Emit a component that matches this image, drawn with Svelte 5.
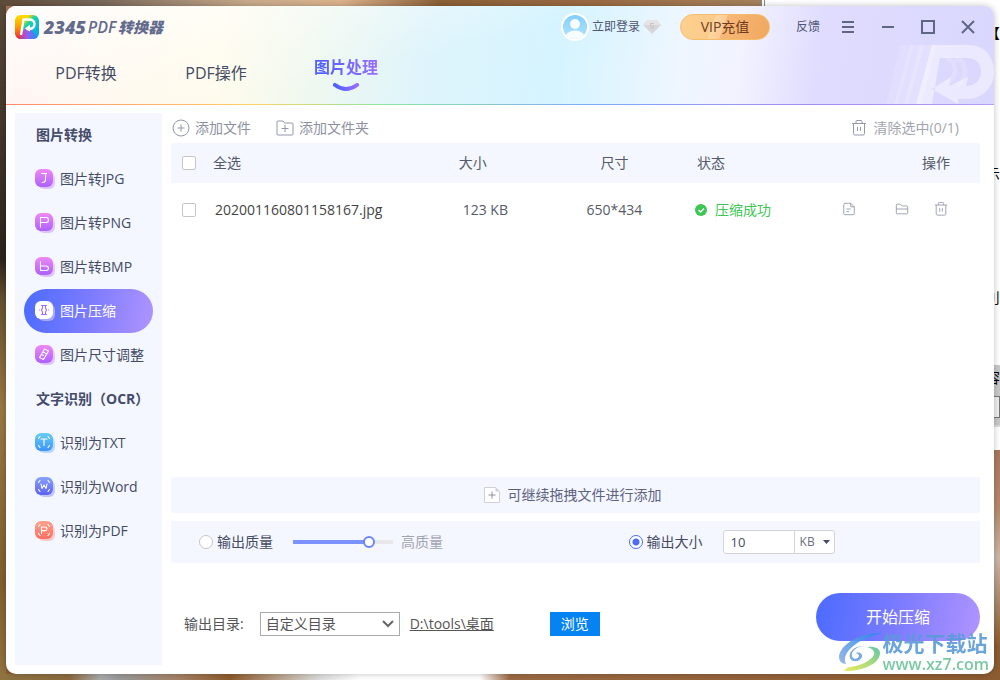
<script lang="ts">
  let tab = $state('图片处理');
  let current = $state('图片压缩');
  let mode = $state('size');
  let quality = $state(80);
  let size = $state('10');
  let unit = $state('KB');
  let directory = $state('自定义目录');
  let files = $state([
    { name: '202001160801158167.jpg', size: '123 KB', dimensions: '650*434', status: '压缩成功', selected: false },
  ]);

  const tabs = ['PDF转换', 'PDF操作', '图片处理'];

  const groups = [
    {
      title: '图片转换',
      items: [
        { name: '图片转JPG', icon: 'jpg', color: 'pink' },
        { name: '图片转PNG', icon: 'png', color: 'pink' },
        { name: '图片转BMP', icon: 'bmp', color: 'pink' },
        { name: '图片压缩', icon: 'compress', color: 'pink' },
        { name: '图片尺寸调整', icon: 'resize', color: 'pink' },
      ],
    },
    {
      title: '文字识别（OCR）',
      items: [
        { name: '识别为TXT', icon: 'txt', color: 'blue' },
        { name: '识别为Word', icon: 'word', color: 'indigo' },
        { name: '识别为PDF', icon: 'pdf', color: 'coral' },
      ],
    },
  ];

  let selectedCount = $derived(files.filter((f) => f.selected).length);
  let allSelected = $derived(files.length > 0 && selectedCount === files.length);

  function toggleAll() {
    const next = !allSelected;
    files.forEach((f) => (f.selected = next));
  }

  function clearSelected() {
    files = files.filter((f) => !f.selected);
  }

  function remove(name: string) {
    files = files.filter((f) => f.name !== name);
  }
</script>

{#snippet trash()}
  <svg class="line-icon" viewBox="0 0 16 16" aria-hidden="true">
    <path d="M1 3.500h14M5 3.500v-2q0-1 1-1h4q1 0 1 1v2M2.500 3.500v10q0 1.500 1.500 1.500h8q1.500 0 1.500-1.500v-10M6.500 7v4M9.500 7v4" />
  </svg>
{/snippet}

{#snippet itemIcon(icon, color, active)}
  <svg class="item-icon" viewBox="0 0 20 20" aria-hidden="true">
    <rect x="3" y="3" width="17" height="17" rx="6" fill={active ? '#b9b5ff' : `url(#${color})`} opacity={active ? 0.8 : 0.35} />
    <rect width="18" height="18" rx="6" fill={active ? '#fff' : `url(#${color})`} />
    <g fill="none" stroke={active ? '#a06bff' : '#fff'} stroke-width="1.1" stroke-linecap="round" stroke-linejoin="round">
      {#if icon === 'jpg'}
        <path d="M6.500 4.500h5M10.500 4.500v6q0 3-3.500 3" />
      {:else if icon === 'png'}
        <path d="M5.500 14V4.500h5.500q2.500 0 2.500 2.500t-2.500 2.500H5.500" />
      {:else if icon === 'bmp'}
        <path d="M5.500 4.500V13.500h5.500q2.500 0 2.500-2.200t-2.500-2.300H5.500" />
      {:else if icon === 'compress'}
        <path d="M6.500 4.500h5M6.500 13.500h5M7.500 4.500v2.500l-1 2 1 2v2.500M10.500 4.500v2.500l1 2-1 2v2.500M4.500 9h.1M13.500 9h.1" />
      {:else if icon === 'resize'}
        <path d="M9.500 4l4 2-5 8.500-4-2zM8 7l2 1M6.500 9.500l2 1M10.500 8.500l1 .5" />
      {:else}
        <path d="M3.500 5.500l1.500-2M14.500 5.500l-1.500-2M3.500 12.500l1.500 2M14.500 12.500l-1.500 2" />
        {#if icon === 'txt'}
          <path d="M6 6h6M9 6v6.500" />
        {:else if icon === 'word'}
          <path d="M6 7l1 4.500 2-3.500 2 3.500 1-4.500" />
        {:else}
          <path d="M6.500 12.500V6h3.500q2 0 2 1.800t-2 1.800H6.500" />
        {/if}
      {/if}
    </g>
  </svg>
{/snippet}

<svg class="defs" width="0" height="0" aria-hidden="true">
  <defs>
    <linearGradient id="pink" x1="0" y1="0" x2="0" y2="1">
      <stop offset="0" stop-color="#f089f6" /><stop offset="1" stop-color="#ac60fb" />
    </linearGradient>
    <linearGradient id="blue" x1="0" y1="0" x2="0" y2="1">
      <stop offset="0" stop-color="#66cdf5" /><stop offset="1" stop-color="#3c94fa" />
    </linearGradient>
    <linearGradient id="indigo" x1="0" y1="0" x2="0" y2="1">
      <stop offset="0" stop-color="#88a2fb" /><stop offset="1" stop-color="#5b62f5" />
    </linearGradient>
    <linearGradient id="coral" x1="0" y1="0" x2="0" y2="1">
      <stop offset="0" stop-color="#ffa28e" /><stop offset="1" stop-color="#fb6f61" />
    </linearGradient>
    <linearGradient id="smile">
      <stop offset="0" stop-color="#4a62ff" /><stop offset="1" stop-color="#9a6cff" />
    </linearGradient>
  </defs>
</svg>

<div class="desktop">
  <div class="back-window" aria-hidden="true">
    <span>【</span>
    <span>示</span>
    <span>刂</span>
    <div class="back-strip"><span>容</span><i></i></div>
  </div>

  <div class="window">
    <header>
      <svg class="header-art" viewBox="0 0 108 59" aria-hidden="true">
        <path d="M14 0h14L12 59H0z" fill="#fff" opacity=".12" />
        <path d="M24 0h14L22 59H8z" fill="#fff" opacity=".15" />
        <path d="M34 0h16L36 59H18z" fill="#fff" opacity=".2" />
        <path fill="#fff" opacity=".45" fill-rule="evenodd" d="M46 0h36c16 0 26 11 26 27S96 54 80 54H72v5L46 44l19-12-2 9 19-9-2 9c8 0 15-5 15-14s-5-14-14-14H54L46 59H30z" />
        <path d="M60 13c12 4 12 19 0 26M69 13c14 4 12 22 2 27" fill="none" stroke="#fff" stroke-width="5" opacity=".15" />
      </svg>

      <div class="titlebar">
        <svg class="logo" viewBox="0 0 24 24" aria-hidden="true">
          <defs>
            <linearGradient id="logo-a" x1="0" y1="0" x2="1" y2="1">
              <stop offset="0" stop-color="#ffd500" /><stop offset=".3" stop-color="#ffd500" />
              <stop offset=".45" stop-color="#17d3a5" /><stop offset="1" stop-color="#079bff" />
            </linearGradient>
            <linearGradient id="logo-b" x1="0" y1="0" x2="0" y2="1">
              <stop offset="0" stop-color="#ffe100" /><stop offset=".5" stop-color="#ff9a00" /><stop offset="1" stop-color="#f5203c" />
            </linearGradient>
            <linearGradient id="logo-c">
              <stop offset="0" stop-color="#f5203c" /><stop offset=".5" stop-color="#9b5bea" /><stop offset="1" stop-color="#079bff" />
            </linearGradient>
            <clipPath id="logo-clip"><rect width="24" height="24" rx="6" /></clipPath>
          </defs>
          <g clip-path="url(#logo-clip)">
            <rect width="24" height="24" fill="url(#logo-a)" />
            <path d="M0 24L13 11l11 13z" fill="url(#logo-c)" />
            <path d="M0 0h9L5 24H0z" fill="url(#logo-b)" />
          </g>
          <path d="M6 20L8.500 4.500h5c4 0 6 2 6 4.600 0 3-2.300 5-6 5h-2" fill="none" stroke="#fff" stroke-width="2.400" />
          <path d="M10 13.500l5-4v7z" fill="#fff" />
        </svg>
        <h1><b>2345</b><em>PDF</em><small>转换器</small></h1>

        <button class="login">
          <svg class="avatar" viewBox="0 0 28 28" aria-hidden="true">
            <defs>
              <linearGradient id="sky" x1="0" y1="0" x2="0" y2="1">
                <stop offset="0" stop-color="#80cdfd" /><stop offset="1" stop-color="#b5e6ff" />
              </linearGradient>
              <clipPath id="face"><circle cx="14" cy="14" r="12" /></clipPath>
            </defs>
            <circle cx="14" cy="14" r="13" fill="url(#sky)" stroke="#fff" stroke-width="2" />
            <g clip-path="url(#face)" fill="#f7fcff">
              <circle cx="14" cy="11" r="5" />
              <ellipse cx="14" cy="25" rx="10" ry="7.500" />
            </g>
          </svg>
          立即登录
          <svg class="gem" viewBox="0 0 18 14" aria-hidden="true">
            <path d="M4 0h10l4 5-9 9-9-9z" fill="#d8d6d8" />
            <path d="M4 0h10l4 5H0z" fill="#e5e3e4" />
            <path d="M11 3.500H7.500v2.200h3.200v2.300H7" fill="none" stroke="#c8c5c8" />
          </svg>
        </button>
        <button class="vip">VIP充值</button>
        <button class="feedback">反馈</button>
        <button class="win-button" aria-label="菜单">
          <svg viewBox="0 0 14 14"><path d="M1 2h12M1 7h12M1 12h12" /></svg>
        </button>
        <button class="win-button" aria-label="最小化">
          <svg viewBox="0 0 14 14"><path d="M1 7h12" /></svg>
        </button>
        <button class="win-button" aria-label="最大化">
          <svg viewBox="0 0 14 14"><path d="M1 1h12v12H1z" /></svg>
        </button>
        <button class="win-button" aria-label="关闭">
          <svg viewBox="0 0 14 14"><path d="M1 1l12 12M13 1L1 13" /></svg>
        </button>
      </div>

      <nav>
        {#each tabs as name}
          <button class="tab" class:active={tab === name} onclick={() => (tab = name)}>
            <span>{name}</span>
            {#if tab === name}
              <svg viewBox="0 0 26 9" aria-hidden="true">
                <path d="M2 2q11 8 22 0" fill="none" stroke="url(#smile)" stroke-width="4" stroke-linecap="round" />
              </svg>
            {/if}
          </button>
        {/each}
      </nav>
    </header>

    <div class="content">
      <aside>
        {#each groups as group}
          <h2>{group.title}</h2>
          {#each group.items as item}
            <button class="side-item" class:active={current === item.name} onclick={() => (current = item.name)}>
              {@render itemIcon(item.icon, item.color, current === item.name)}
              {item.name}
            </button>
          {/each}
        {/each}
      </aside>

      <main>
        <div class="toolbar">
          <button>
            <svg class="line-icon large" viewBox="0 0 18 18" aria-hidden="true">
              <circle cx="9" cy="9" r="8" /><path d="M5.500 9h7M9 5.500v7" />
            </svg>
            添加文件
          </button>
          <button>
            <svg class="line-icon large" viewBox="0 0 18 18" aria-hidden="true">
              <path d="M1 15V3q0-1 1-1h5l1.500 2H16q1 0 1 1v10q0 1-1 1H2q-1 0-1-1zM5.500 9.500h7M9 6v7" />
            </svg>
            添加文件夹
          </button>
          <button class="clear" onclick={clearSelected}>
            {@render trash()}
            清除选中({selectedCount}/{files.length})
          </button>
        </div>

        <table>
          <thead>
            <tr>
              <th class="check"><input type="checkbox" id="all" checked={allSelected} onchange={toggleAll} /></th>
              <th class="name"><label for="all">全选</label></th>
              <th class="size">大小</th>
              <th class="dimensions">尺寸</th>
              <th class="status">状态</th>
              <th class="actions">操作</th>
            </tr>
          </thead>
          <tbody>
            {#each files as file}
              <tr>
                <td class="check"><input type="checkbox" aria-label={file.name} bind:checked={file.selected} /></td>
                <td class="name">{file.name}</td>
                <td class="size">{file.size}</td>
                <td class="dimensions">{file.dimensions}</td>
                <td class="status">
                  <div class="done">
                    <svg viewBox="0 0 12 12" aria-hidden="true">
                      <circle cx="6" cy="6" r="6" fill="#3cc653" />
                      <path d="M3.500 6l2 2 3.500-3.500" fill="none" stroke="#fff" stroke-width="1.300" />
                    </svg>
                    {file.status}
                  </div>
                </td>
                <td class="actions">
                  <div class="row-actions">
                    <button class="open" aria-label="打开文件">
                      <svg class="line-icon" viewBox="0 0 16 16">
                        <path d="M10 1.500H3.500q-1.500 0-1.500 1.500v10q0 1.500 1.500 1.500h9q1.500 0 1.500-1.500V5.500zM10 1.500v4h4M5 8h5M5 11h3" />
                      </svg>
                    </button>
                    <button aria-label="打开文件夹">
                      <svg class="line-icon" viewBox="0 0 16 16">
                        <path d="M1.500 12.500v-9q0-1 1-1h3.500l2 2h5.500q1 0 1 1v7q0 1-1 1h-11q-1 0-1-1zM1.500 8h13" />
                      </svg>
                    </button>
                    <button aria-label="删除" onclick={() => remove(file.name)}>{@render trash()}</button>
                  </div>
                </td>
              </tr>
            {/each}
          </tbody>
        </table>

        <button class="drop">
          <svg viewBox="0 0 16 16" aria-hidden="true">
            <path d="M.5.5h11l4 4v11H.5z" fill="#fff" stroke="#d0d0d4" />
            <path d="M11.500.5v4h4z" fill="#d0d0d4" />
            <path d="M4.500 8h7M8 4.500v7" stroke="#8d8f99" />
          </svg>
          可继续拖拽文件进行添加
        </button>

        <div class="options">
          <div class="option">
            <label class="radio"><input type="radio" name="mode" value="quality" bind:group={mode} />输出质量</label>
            <input
              class="slider"
              type="range"
              min="0"
              max="100"
              aria-label="输出质量"
              style="--value: {quality}%"
              bind:value={quality}
            />
            <span class="hint">高质量</span>
          </div>
          <div class="option">
            <label class="radio"><input type="radio" name="mode" value="size" bind:group={mode} />输出大小</label>
            <div class="size-field">
              <input type="text" aria-label="输出大小" bind:value={size} />
              <div class="unit">
                <select aria-label="单位" bind:value={unit}>
                  <option>KB</option>
                  <option>MB</option>
                </select>
                <svg viewBox="0 0 7 4" aria-hidden="true"><path d="M0 0h7L3.500 4z" fill="#444b63" /></svg>
              </div>
            </div>
          </div>
        </div>

        <footer>
          <div class="output">
            <label for="directory">输出目录:</label>
            <div class="directory">
              <select id="directory" bind:value={directory}>
                <option>自定义目录</option>
                <option>原文件目录</option>
              </select>
              <svg viewBox="0 0 12 8" aria-hidden="true"><path d="M1 1l5 5 5-5" fill="none" stroke="#666" stroke-width="2" /></svg>
            </div>
            <a href="#output">D:\tools\桌面</a>
            <button class="browse">浏览</button>
          </div>
          <button class="start">开始压缩</button>
        </footer>
      </main>
    </div>
  </div>

  <div class="site-mark">
    <svg viewBox="0 0 44 40" aria-hidden="true">
      <defs>
        <linearGradient id="mark-blue" x1="0" y1="1" x2="1" y2="0">
          <stop offset="0" stop-color="#8fb0e6" /><stop offset="1" stop-color="#2389e6" />
        </linearGradient>
        <linearGradient id="mark-green" x1="0" y1="1" x2="1" y2="0">
          <stop offset="0" stop-color="#efe94e" /><stop offset=".5" stop-color="#a5d96a" /><stop offset="1" stop-color="#4fc0a0" />
        </linearGradient>
      </defs>
      <path d="M44 1C22 1 2 12 1 25c0 4 3 7 7 7-5-10 8-24 36-31z" fill="url(#mark-blue)" />
      <path d="M27 14c-10-1-17 6-15 12 2 5 10 4 12-1 1-4-4-6-7-3 2-1 4 0 4 2-1 3-6 4-7 0-1-5 5-10 13-10z" fill="#6fa3dc" />
      <path d="M29 15c7-1 13 1 13 6 0 10-16 19-38 18 5 0 3-4 8-4 12-1 26-9 24-15-1-3-4-4-7-5z" fill="url(#mark-green)" />
    </svg>
    <div>
      <strong>极光下载站</strong>
      <span>www.xz7.com</span>
    </div>
  </div>
</div>

<style>
  :global(body) {
    margin: 0;
    background: #8a6138;
  }

  .defs {
    position: absolute;
  }

  .desktop {
    box-sizing: border-box;
    display: flex;
    position: relative;
    min-height: 100vh;
    padding: 6px;
    overflow: hidden;
    font-family: 'Open Sans', 'Noto Sans CJK SC', sans-serif;
    font-size: 14px;
    line-height: 20px;
    color: #444b63;
    background:
      linear-gradient(90deg, #8e7340 0, #8b6b40 7%, #aaa 10%, #999 12%, #a58063 18%, #8d5b2c 23%, #ddd 32%, #fff 36%, #fff 48%, #9c6a43 51%, #8b5c31 100%) bottom / 100% 6px no-repeat,
      linear-gradient(90deg, #5e4a38, #79685a 10%, #c9ab8c 25%, #dcb48d 34%, #8b6038 44%, #9b6b45 60%, #a5825c 76%) top / 100% 6px no-repeat,
      linear-gradient(180deg, #594a38 0, #2c241c 38%, #66502f 44%, #9a7844 60%, #806030 85%, #91733f 100%) left / 6px 100% no-repeat,
      linear-gradient(180deg, #a8785a 66%, #b58b6e 75%, #c9b8a8 82%, #8b5c31 95%);
  }

  button,
  input,
  select {
    font: inherit;
    color: inherit;
  }

  button {
    padding: 0;
    border: none;
    background: none;
    cursor: pointer;
  }

  /* another window, partly hidden behind this one */
  .back-window {
    box-sizing: border-box;
    position: absolute;
    top: 0;
    right: 0;
    width: 239px;
    height: 450px;
    border-left: 4px double #888;
    background: #fff;
    color: #000;
  }

  .back-window span {
    position: absolute;
    right: 0;
    top: 164px;
  }

  .back-window span:first-child {
    top: 23px;
  }

  .back-window span:nth-child(3) {
    top: 288px;
  }

  .back-strip {
    position: absolute;
    top: 365px;
    right: 0;
    width: 20px;
    height: 60px;
    border-bottom: 2px solid #ddd;
    background: #c8c8c8;
  }

  .back-window .back-strip span {
    top: 3px;
  }

  .back-strip i {
    position: absolute;
    right: 0;
    top: 31px;
    width: 12px;
    height: 20px;
    border: 1px solid #777;
    background: #eee;
  }

  .window {
    display: flex;
    flex-direction: column;
    flex: 1;
    position: relative;
    overflow: hidden;
    border-radius: 10px;
    background: #fff;
    box-shadow: 0 0 6px rgba(0, 0, 0, 0.25);
  }

  header {
    position: relative;
    height: 99px;
    background:
      linear-gradient(90deg, #ff8a70, #ffd166 25%, #8fe6a0 38%, #7fa8ff 60%, #a78bf5 82%, #b79bf5) bottom / 100% 1px no-repeat,
      linear-gradient(165deg, rgba(255, 255, 255, 0.8), rgba(255, 255, 255, 0) 45%),
      linear-gradient(97deg, #fff1ef 0, #fff8ec 12%, #fffbeb 22%, #eef8f0 32%, #dff4fb 42%, #d5f4ff 56%, #eef6ff 68%, #f2f3ff 74%, #dfdcff 82%, #dad7fe 100%);
  }

  .header-art {
    position: absolute;
    right: 0;
    bottom: 1px;
    width: 108px;
    height: 59px;
  }

  .titlebar {
    display: flex;
    position: relative;
    align-items: center;
    height: 42px;
    padding: 0 19px 0 9px;
    color: #4f5674;
    font-size: 12px;
  }

  .logo {
    width: 24px;
    height: 24px;
  }

  h1 {
    display: flex;
    align-items: center;
    gap: 2px;
    margin: 0 auto 0 5px;
    color: #626b8d;
    font-size: 18px;
    font-style: italic;
  }

  h1 b {
    font-weight: 800;
  }

  h1 em {
    font-weight: 600;
    font-size: 16px;
  }

  h1 small {
    font-size: 15px;
    font-weight: 900;
  }

  .login {
    display: flex;
    align-items: center;
    gap: 3px;
    margin-right: 19px;
  }

  .avatar {
    width: 28px;
    height: 28px;
  }

  .gem {
    width: 18px;
    height: 14px;
  }

  .vip {
    width: 90px;
    height: 26px;
    margin-right: 26px;
    border: 1px solid #f5bd6a;
    border-radius: 13px;
    background: linear-gradient(110deg, #fdd191 0, #fbcb8a 36%, #fdd6a2 37%, #fbcb95 48%, #f6b877 49%, #f1a75e 100%);
    color: #713b22;
    font-size: 14px;
    line-height: 20px;
  }

  .feedback {
    margin-right: 8px;
  }

  .win-button {
    display: grid;
    place-items: center;
    width: 40px;
    height: 30px;
  }

  .win-button:last-child {
    margin-right: -13px;
  }

  .win-button svg {
    width: 14px;
    height: 14px;
    fill: none;
    stroke: #606786;
    stroke-width: 2;
  }

  nav {
    display: flex;
    position: relative;
    gap: 64px;
    padding: 0 47px;
  }

  .tab {
    display: flex;
    flex-direction: column;
    align-items: center;
    min-width: 66px;
    padding-top: 13px;
    font-size: 16px;
    line-height: 24px;
  }

  .tab.active {
    padding-top: 7px;
    font-weight: 700;
  }

  .tab.active span {
    background: linear-gradient(90deg, #4a5fff, #9a6cff);
    background-clip: text;
    color: transparent;
  }

  .tab svg {
    width: 26px;
    height: 9px;
    margin-top: 4px;
  }

  .content {
    display: flex;
    flex: 1;
    gap: 9px;
    padding: 8px 14px 9px 9px;
  }

  aside {
    display: flex;
    flex-direction: column;
    flex: 0 0 147px;
    min-width: 0;
    background: #f4f7ff;
  }

  h2 {
    margin: 0 0 0 21px;
    color: #444b6b;
    font-size: 14px;
    line-height: 44px;
    font-weight: 700;
    white-space: nowrap;
  }

  .side-item {
    display: flex;
    align-items: center;
    gap: 5px;
    height: 44px;
    margin: 0 9px;
    padding-left: 11px;
    border-radius: 22px;
    white-space: nowrap;
  }

  .side-item.active {
    background: linear-gradient(100deg, #4b6bff, #7c7bff 50%, #b094ff);
    color: #fff;
  }

  .item-icon {
    flex: none;
    width: 20px;
    height: 20px;
  }

  main {
    display: flex;
    flex-direction: column;
    flex: 1;
    min-width: 0;
  }

  .line-icon {
    display: block;
    width: 16px;
    height: 16px;
    fill: none;
    stroke: #9497ab;
    stroke-width: 1;
  }

  .line-icon.large {
    width: 18px;
    height: 18px;
  }

  .toolbar {
    display: flex;
    gap: 24px;
    height: 30px;
    color: #8d90a0;
  }

  .toolbar button {
    display: flex;
    align-items: center;
    gap: 5px;
    padding-left: 1px;
  }

  .toolbar .clear {
    margin: 0 21px 0 auto;
    gap: 7px;
    color: #a3a5ae;
  }

  table {
    width: 100%;
    table-layout: fixed;
    border-collapse: collapse;
    color: #555a68;
  }

  th,
  td {
    box-sizing: border-box;
    padding: 0;
    text-align: left;
    font-weight: 400;
  }

  th {
    height: 40px;
    background: #f4f7ff;
  }

  td {
    height: 54px;
  }

  .check {
    width: 42px;
    padding-left: 11px;
  }

  .name {
    width: 30%;
  }

  td.name {
    padding-left: 2px;
    color: #444;
  }

  .size {
    width: 14%;
    padding-left: 3px;
  }

  td.size {
    padding-left: 7px;
  }

  .dimensions {
    width: 11%;
    padding-left: 2px;
    text-align: center;
  }

  .status {
    width: 20%;
    padding-left: 39px;
  }

  td.status {
    padding-left: 37px;
  }

  th.actions {
    padding-right: 30px;
    text-align: right;
  }

  td.actions {
    padding-right: 32px;
  }

  input[type='checkbox'] {
    display: block;
    appearance: none;
    width: 14px;
    height: 14px;
    margin: 0;
    border: 1px solid #c4c5ca;
    border-radius: 2px;
    background: #fff;
  }

  input[type='checkbox']:checked {
    border-color: #4b6bff;
    background: #4b6bff;
  }

  .done {
    display: flex;
    align-items: center;
    gap: 8px;
    color: #3cc653;
  }

  .done svg {
    width: 12px;
    height: 12px;
  }

  .row-actions {
    display: flex;
    justify-content: flex-end;
    gap: 25px;
    padding-bottom: 3px;
  }

  .row-actions .line-icon {
    width: 14px;
    height: 14px;
  }

  .row-actions .open {
    margin-right: 14px;
  }

  .drop {
    display: flex;
    align-items: center;
    justify-content: center;
    gap: 8px;
    height: 36px;
    margin-top: auto;
    padding-right: 6px;
    background: #f4f7ff;
    color: #5c6280;
  }

  .drop svg {
    width: 16px;
    height: 16px;
    fill: none;
  }

  .options {
    display: flex;
    align-items: center;
    height: 42px;
    margin-top: 8px;
    padding-left: 28px;
    background: #f4f7ff;
  }

  .option {
    display: flex;
    align-items: center;
    flex: 0 0 55%;
  }

  .option:last-child {
    flex: 1;
  }

  .radio {
    display: flex;
    align-items: center;
    gap: 4px;
    margin-right: 20px;
  }

  input[type='radio'] {
    appearance: none;
    width: 14px;
    height: 14px;
    margin: 0;
    border: 1px solid #c4c5ca;
    border-radius: 50%;
    background: #fff;
  }

  input[type='radio']:checked {
    border-color: #4b6bff;
    background: radial-gradient(circle, #4b6bff 3px, #fff 4px);
  }

  .slider {
    appearance: none;
    width: 100px;
    height: 12px;
    margin: 0 8px 0 0;
    background: linear-gradient(90deg, #7b93ff var(--value), #e8e8ea var(--value)) center / 100% 4px no-repeat;
  }

  .slider::-webkit-slider-thumb {
    appearance: none;
    box-sizing: border-box;
    width: 12px;
    height: 12px;
    border: 2px solid #6c85ff;
    border-radius: 50%;
    background: #fff;
  }

  .hint {
    color: #a3a5ae;
  }

  .size-field {
    display: flex;
    height: 22px;
    border: 1px solid #d3d4d8;
    border-radius: 3px;
    background: #fff;
    font-size: 13px;
  }

  .size-field input {
    box-sizing: border-box;
    width: 71px;
    padding: 0 7px;
    border: none;
    border-right: 1px solid #d3d4d8;
    background: none;
  }

  .unit,
  .directory {
    display: grid;
    align-items: center;
  }

  .unit select,
  .unit svg,
  .directory select,
  .directory svg {
    grid-area: 1 / 1;
  }

  .unit svg,
  .directory svg {
    justify-self: end;
    pointer-events: none;
  }

  .unit select {
    appearance: none;
    width: 39px;
    height: 22px;
    padding: 0 5px;
    border: none;
    background: none;
    color: #6c7080;
    font-size: 12px;
  }

  .unit svg {
    width: 7px;
    height: 4px;
    margin-right: 4px;
  }

  footer {
    display: flex;
    align-items: flex-end;
    justify-content: space-between;
    padding: 30px 0 24px 13px;
  }

  .output {
    display: flex;
    align-items: center;
    padding-bottom: 5px;
    color: #555;
  }

  .directory {
    margin: 0 10px 0 16px;
  }

  .directory select {
    appearance: none;
    width: 140px;
    height: 24px;
    padding: 0 5px;
    border: 1px solid #aaa;
    border-radius: 0;
    background: #fff;
  }

  .directory svg {
    width: 12px;
    height: 8px;
    margin-right: 6px;
  }

  .output a {
    margin-right: 56px;
    color: inherit;
  }

  .browse {
    width: 50px;
    height: 24px;
    background: #0583f2;
    color: #fff;
  }

  .start {
    width: 164px;
    height: 48px;
    border-radius: 24px;
    background: linear-gradient(100deg, #4b6bff, #7c7bff 50%, #b094ff);
    color: #fff;
    font-size: 16px;
  }

  .site-mark {
    display: flex;
    position: absolute;
    right: 11px;
    bottom: 6px;
    gap: 1px;
    color: #5a9bd8;
    opacity: 0.9;
    pointer-events: none;
  }

  .site-mark svg {
    width: 44px;
    height: 40px;
  }

  .site-mark div {
    display: flex;
    flex-direction: column;
  }

  .site-mark strong {
    font-size: 21px;
    line-height: 22px;
  }

  .site-mark span {
    color: #6cc49a;
    font-size: 16px;
    font-weight: 600;
    line-height: 20px;
  }
</style>
